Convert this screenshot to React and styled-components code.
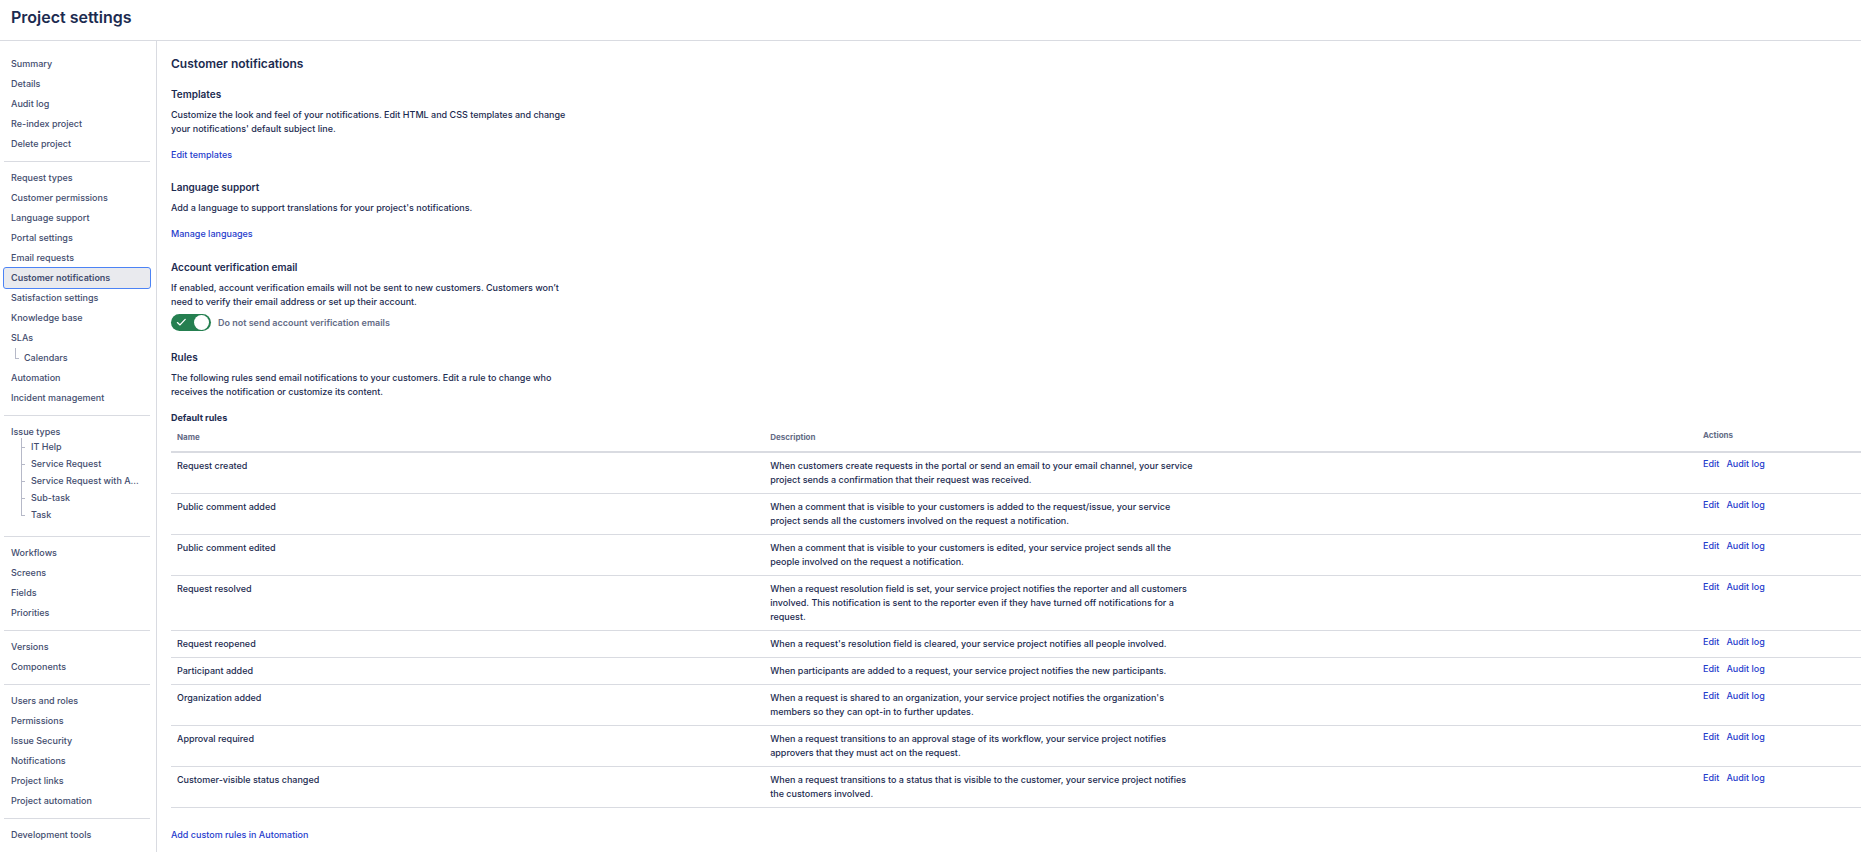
import React, { useState } from "react";
import styled, { createGlobalStyle } from "styled-components";

const Global = createGlobalStyle`
  *, *::before, *::after { box-sizing: border-box; }
  body {
    margin: 0;
    background: #fff;
    color: #1c2b50;
    font: 500 9px/14px Inter, "Liberation Sans", sans-serif;
  }
  h1, h2, h3, h4, p, ul { margin: 0; padding: 0; }
  ul { list-style: none; }
`;

const Page = styled.div`
  display: flex;
  flex-direction: column;
  min-height: 100vh;
`;

const Header = styled.header`
  padding: 7px 11px 13px;
  border-bottom: 1px solid #d9dbe1;
`;

const PageTitle = styled.h1`
  font-size: 16px;
  line-height: 20px;
  font-weight: 600;
`;

const Body = styled.div`
  display: flex;
  flex: 1;
`;

const Sidebar = styled.nav`
  flex: 0 0 157px;
  padding: 13px 6px 7px 4px;
  border-right: 1px solid #d9dbe1;
`;

const NavGroup = styled.ul`
  & + & {
    margin-top: 7px;
    padding-top: 6px;
    border-top: 1px solid #d9dbe1;
  }
`;

const NavLink = styled.a`
  display: flex;
  align-items: center;
  height: 20px;
  padding-left: ${(p) => (p.$nested ? 20 : 7)}px;
  border-radius: 2px;
  color: #434d6e;
  text-decoration: none;
  position: relative;
  font-weight: ${(p) => (p.$active ? 600 : 500)};
  background: ${(p) => (p.$active ? "#e9eaee" : "transparent")};
  outline: ${(p) => (p.$active ? "1px solid #4c83f5" : "none")};

  &::before {
    content: ${(p) => (p.$nested ? '""' : "none")};
    position: absolute;
    left: 11px;
    top: 0;
    width: 4px;
    height: 11px;
    border-left: 1px solid #b6b9c8;
    border-bottom: 1px solid #b6b9c8;
  }
`;

const TypeList = styled.ul`
  margin-top: -4px;
  padding: 0 0 6px 17px;
`;

const TypeItem = styled.li`
  position: relative;
  padding-left: 10px;

  &::before, &::after {
    content: "";
    position: absolute;
    left: 0;
    background: #b6b9c8;
  }
  &::before { top: 0; width: 1px; height: 17px; }
  &:last-child::before { height: 10px; }
  &::after { top: 9px; width: 4px; height: 1px; }
`;

const TypeLink = styled.a`
  display: block;
  line-height: 17px;
  color: #434d6e;
  text-decoration: none;
`;

const Main = styled.main`
  flex: 1;
  min-width: 0;
  padding: 13px 0 10px 14px;
`;

const Title = styled.h2`
  font-size: 12px;
  line-height: 20px;
  font-weight: 600;
`;

const Section = styled.section`
  margin-top: ${(p) => p.$gap}px;
`;

const Heading = styled.h3`
  margin-bottom: 6px;
  font-size: 10px;
  line-height: 16px;
  font-weight: 600;
`;

const Text = styled.p`
  max-width: 400px;
`;

const Link = styled.a`
  color: #1f3ccc;
  text-decoration: none;
`;

const LinkLine = styled.p`
  margin-top: ${(p) => p.$gap}px;
`;

const ToggleRow = styled.div`
  display: flex;
  align-items: center;
  gap: 7px;
  height: 17px;
  margin-top: 5px;
`;

const ToggleTrack = styled.span`
  position: relative;
  display: block;
  width: 40px;
  height: 17px;
  border-radius: 9px;
  background: ${(p) => (p.$on ? "#257f50" : "#626f86")};
`;

const ToggleInput = styled.input`
  position: absolute;
  inset: 0;
  width: 100%;
  height: 100%;
  margin: 0;
  opacity: 0;
  cursor: pointer;
`;

const ToggleKnob = styled.span`
  position: absolute;
  top: 1px;
  left: ${(p) => (p.$on ? 23 : 2)}px;
  width: 15px;
  height: 15px;
  border-radius: 50%;
  background: #fff;
  pointer-events: none;
`;

const ToggleCheck = styled.svg`
  position: absolute;
  top: 4px;
  left: 5px;
  width: 11px;
  height: 9px;
  pointer-events: none;
`;

const ToggleLabel = styled.label`
  color: #646c86;
  font-weight: 600;
`;

const TableTitle = styled.h4`
  margin-top: 12px;
  font-size: 9px;
  line-height: 14px;
  font-weight: 700;
`;

const Table = styled.table`
  width: 100%;
  table-layout: fixed;
  border-collapse: separate;
  border-spacing: 0;
`;

const HeadCell = styled.th`
  width: ${(p) => p.$width};
  height: 28px;
  padding: ${(p) => (p.$raised ? "4px 6px 10px" : "6px 6px 8px")};
  border-bottom: 2px solid #d9dbe1;
  color: #646c86;
  font-size: 8px;
  line-height: 12px;
  font-weight: 700;
  text-align: left;
  vertical-align: top;
`;

const Cell = styled.td`
  padding: ${(p) => (p.$raised ? "4px 6px 8px" : "6px")};
  border-bottom: 1px solid #d9dbe1;
  vertical-align: top;
`;

const Description = styled.p`
  max-width: 427px;
`;

const Actions = styled.div`
  display: flex;
  gap: 7px;
`;

const navGroups = [
  ["Summary", "Details", "Audit log", "Re-index project", "Delete project"],
  [
    "Request types", "Customer permissions", "Language support", "Portal settings",
    "Email requests", "Customer notifications", "Satisfaction settings", "Knowledge base",
    "SLAs", "Calendars", "Automation", "Incident management",
  ],
  ["Issue types"],
  ["Workflows", "Screens", "Fields", "Priorities"],
  ["Versions", "Components"],
  ["Users and roles", "Permissions", "Issue Security", "Notifications", "Project links", "Project automation"],
  ["Development tools"],
];

const issueTypes = ["IT Help", "Service Request", "Service Request with A...", "Sub-task", "Task"];

const rules = [
  ["Request created", "When customers create requests in the portal or send an email to your email channel, your service project sends a confirmation that their request was received."],
  ["Public comment added", "When a comment that is visible to your customers is added to the request/issue, your service project sends all the customers involved on the request a notification."],
  ["Public comment edited", "When a comment that is visible to your customers is edited, your service project sends all the people involved on the request a notification."],
  ["Request resolved", "When a request resolution field is set, your service project notifies the reporter and all customers involved. This notification is sent to the reporter even if they have turned off notifications for a request."],
  ["Request reopened", "When a request's resolution field is cleared, your service project notifies all people involved."],
  ["Participant added", "When participants are added to a request, your service project notifies the new participants."],
  ["Organization added", "When a request is shared to an organization, your service project notifies the organization's members so they can opt-in to further updates."],
  ["Approval required", "When a request transitions to an approval stage of its workflow, your service project notifies approvers that they must act on the request."],
  ["Customer-visible status changed", "When a request transitions to a status that is visible to the customer, your service project notifies the customers involved."],
];

function Toggle({ id, label }) {
  const [on, setOn] = useState(true);
  return (
    <ToggleRow>
      <ToggleTrack $on={on}>
        <ToggleInput id={id} type="checkbox" role="switch" checked={on} onChange={() => setOn(!on)} />
        {on && (
          <ToggleCheck viewBox="0 0 11 9" fill="none" aria-hidden="true">
            <path d="M1.4 4.6 4 6.9 9.2 1.4" stroke="#fff" strokeWidth="1.3" strokeLinecap="round" strokeLinejoin="round" />
          </ToggleCheck>
        )}
        <ToggleKnob $on={on} />
      </ToggleTrack>
      <ToggleLabel htmlFor={id}>{label}</ToggleLabel>
    </ToggleRow>
  );
}

export default function App() {
  return (
    <Page>
      <Global />
      <Header>
        <PageTitle>Project settings</PageTitle>
      </Header>
      <Body>
        <Sidebar aria-label="Project settings">
          {navGroups.map((group) => (
            <NavGroup key={group[0]}>
              {group.map((item) => (
                <li key={item}>
                  <NavLink
                    href="#"
                    $nested={item === "Calendars"}
                    $active={item === "Customer notifications"}
                    aria-current={item === "Customer notifications" ? "page" : undefined}
                  >
                    {item}
                  </NavLink>
                  {item === "Issue types" && (
                    <TypeList>
                      {issueTypes.map((type) => (
                        <TypeItem key={type}>
                          <TypeLink href="#">{type}</TypeLink>
                        </TypeItem>
                      ))}
                    </TypeList>
                  )}
                </li>
              ))}
            </NavGroup>
          ))}
        </Sidebar>
        <Main>
          <Title>Customer notifications</Title>
          <Section $gap={12}>
            <Heading>Templates</Heading>
            <Text>
              Customize the look and feel of your notifications. Edit HTML and CSS templates and change
              your notifications' default subject line.
            </Text>
            <LinkLine $gap={12}><Link href="#">Edit templates</Link></LinkLine>
          </Section>
          <Section $gap={17}>
            <Heading>Language support</Heading>
            <Text>Add a language to support translations for your project's notifications.</Text>
            <LinkLine $gap={12}><Link href="#">Manage languages</Link></LinkLine>
          </Section>
          <Section $gap={18}>
            <Heading>Account verification email</Heading>
            <Text>
              If enabled, account verification emails will not be sent to new customers. Customers won’t
              need to verify their email address or set up their account.
            </Text>
            <Toggle id="skip-verification" label="Do not send account verification emails" />
          </Section>
          <Section $gap={18}>
            <Heading>Rules</Heading>
            <Text>
              The following rules send email notifications to your customers. Edit a rule to change who
              receives the notification or customize its content.
            </Text>
            <TableTitle id="default-rules">Default rules</TableTitle>
            <Table aria-labelledby="default-rules">
              <thead>
                <tr>
                  <HeadCell scope="col" $width="35.1%">Name</HeadCell>
                  <HeadCell scope="col" $width="55.2%">Description</HeadCell>
                  <HeadCell scope="col" $raised>Actions</HeadCell>
                </tr>
              </thead>
              <tbody>
                {rules.map(([name, description]) => (
                  <tr key={name}>
                    <Cell>{name}</Cell>
                    <Cell><Description>{description}</Description></Cell>
                    <Cell $raised>
                      <Actions>
                        <Link href="#">Edit</Link>
                        <Link href="#">Audit log</Link>
                      </Actions>
                    </Cell>
                  </tr>
                ))}
              </tbody>
            </Table>
            <LinkLine $gap={20}><Link href="#">Add custom rules in Automation</Link></LinkLine>
          </Section>
        </Main>
      </Body>
    </Page>
  );
}
